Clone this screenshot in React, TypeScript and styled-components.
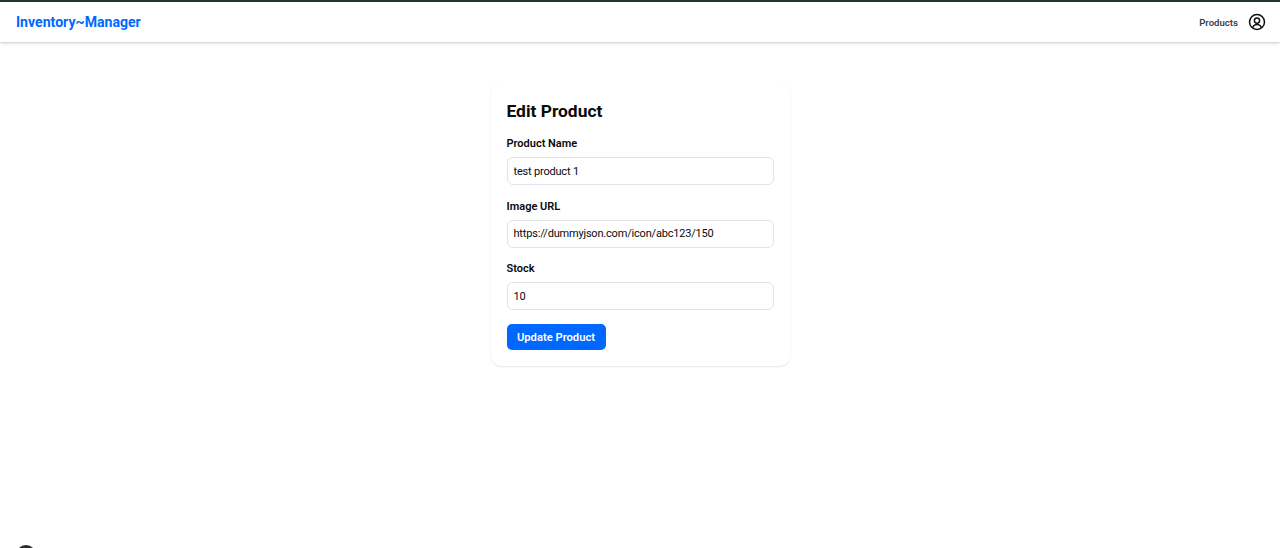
import React from "react";
import styled, { createGlobalStyle } from "styled-components";

const Global = createGlobalStyle`
  html, body { margin: 0; padding: 0; background: #fff; height: 100%; overflow: hidden; }
  * { box-sizing: border-box; }
  body { font-family: Roboto, "Noto Sans", sans-serif; color: #0a0a0a; }
`;
const Page = styled.div`min-height: 548px; display: flex; flex-direction: column;`;
const Nav = styled.header`
  height: 42px; border-top: 2px solid #1d3a38; background: #fff;
  box-shadow: 0 1px 3px rgba(0,0,0,.16), 0 1px 2px rgba(0,0,0,.08);
  display: flex; align-items: center; justify-content: space-between; padding: 0 14px 0 16px;
`;
const Brand = styled.div`font-size: 14.1px; font-weight: 700; color: #0068ff;`;
const NavRight = styled.nav`display: flex; align-items: center; gap: 10px;`;
const NavLink = styled.a`font-size: 9.6px; font-weight: 600; color: #374151;`;
const Main = styled.main`display: flex; justify-content: center; padding-top: 41px;`;
const Card = styled.form`
  width: 299px; height: 283px; padding: 16px; border-radius: 10px; background: #fff;
  box-shadow: 0 1px 2px rgba(0,0,0,.1);
  display: flex; flex-direction: column;
`;
const Title = styled.h1`margin: 1px 0 12px; font-size: 17.4px; line-height: 22px; font-weight: 700;`;
const Field = styled.div`display: flex; flex-direction: column; margin-bottom: 11.67px;`;
const Label = styled.label`font-size: 11px; line-height: 20px; font-weight: 600; margin-bottom: 3px;`;
const Input = styled.input`
  height: 28px; padding: 0 6px; border: 1px solid #dfe3ea; border-radius: 6px;
  font: inherit; font-size: 11px; letter-spacing: -0.19px; color: #0a0a0a; outline: none; background: #fff;
`;
const Button = styled.button`
  align-self: flex-start; width: 99px; height: 26px; padding: 0; margin-top: 2.33px; border: none; border-radius: 5px;
  background: #0068ff; color: #fff; font: inherit; font-size: 11.2px; font-weight: 600;
`;
const DevBadge = styled.div`
  position: fixed; left: 16px; top: 545px; width: 20px; height: 20px; border-radius: 50%; background: #2b2b2b;
`;

export default function App() {
  return (
    <Page>
      <Global />
      <Nav>
        <Brand>Inventory~Manager</Brand>
        <NavRight>
          <NavLink>Products</NavLink>
          <svg width="18" height="18" viewBox="0 0 24 24" fill="none" stroke="#111" strokeWidth="2" strokeLinecap="round" strokeLinejoin="round">
            <circle cx="12" cy="12" r="10" />
            <circle cx="12" cy="10" r="3.5" />
            <path d="M6.2 19.2c.9-2.7 3-4 5.8-4s4.900 1.300 5.800 4" />
          </svg>
        </NavRight>
      </Nav>
      <Main>
        <Card onSubmit={(e) => e.preventDefault()}>
          <Title>Edit Product</Title>
          <Field><Label>Product Name</Label><Input defaultValue="test product 1" /></Field>
          <Field><Label>Image URL</Label><Input defaultValue="https://dummyjson.com/icon/abc123/150" /></Field>
          <Field><Label>Stock</Label><Input defaultValue="10" /></Field>
          <Button type="submit">Update Product</Button>
        </Card>
      </Main>
      <DevBadge />
    </Page>
  );
}
